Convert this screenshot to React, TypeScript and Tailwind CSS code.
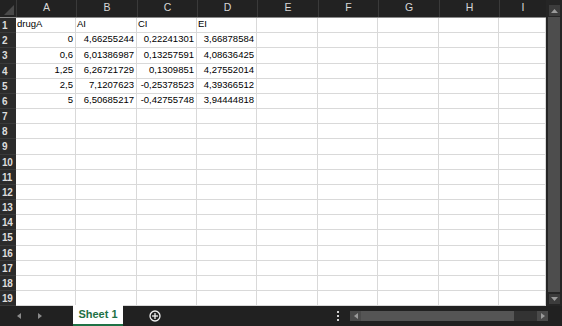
import React from "react";

const cols = [
  { l: "A", w: "w-[60px]" },
  { l: "B", w: "w-[61px]" },
  { l: "C", w: "w-[60px]" },
  { l: "D", w: "w-[60px]" },
  { l: "E", w: "w-[61px]" },
  { l: "F", w: "w-[60px]" },
  { l: "G", w: "w-[61px]" },
  { l: "H", w: "w-[60px]" },
  { l: "I", w: "w-[47px]" },
];

type Cell = { t: string; left?: boolean };
const data: Cell[][] = [
  [{ t: "drugA", left: true }, { t: "AI", left: true }, { t: "CI", left: true }, { t: "EI", left: true }],
  [{ t: "0" }, { t: "4,66255244" }, { t: "0,22241301" }, { t: "3,66878584" }],
  [{ t: "0,6" }, { t: "6,01386987" }, { t: "0,13257591" }, { t: "4,08636425" }],
  [{ t: "1,25" }, { t: "6,26721729" }, { t: "0,1309851" }, { t: "4,27552014" }],
  [{ t: "2,5" }, { t: "7,1207623" }, { t: "-0,25378523" }, { t: "4,39366512" }],
  [{ t: "5" }, { t: "6,50685217" }, { t: "-0,42755748" }, { t: "3,94444818" }],
];

const tall = new Set([2, 8, 14]);

export default function App() {
  const rows = Array.from({ length: 19 }, (_, i) => i);
  return (
    <div className="w-[562px] h-[326px] bg-[#212121] flex flex-col overflow-hidden font-['Liberation_Sans',Arial,sans-serif]">
      <div className="flex h-[306px]">
        <div className="w-[546px] flex flex-col">
          {/* header */}
          <div className="flex h-[18px] bg-[#222222] border-b border-[#8a8a8a]">
            <div className="w-[16px] h-full relative">
              <svg className="absolute left-[4px] top-[5px]" width="10" height="10" viewBox="0 0 10 10">
                <polygon points="10,0 10,10 0,10" fill="#4a4a4a" />
              </svg>
            </div>
            {cols.map((c) => (
              <div
                key={c.l}
                className={`${c.w} h-full flex items-end justify-center pb-[1px] text-[10.5px] text-[#d8d8d8] border-l border-[#3a3a3a]`}
              >
                {c.l}
              </div>
            ))}
          </div>
          {rows.map((i) => (
            <div key={i} className={`flex ${tall.has(i) ? "h-[16px]" : "h-[15px]"}`}>
              <div className="w-[16px] h-full bg-[#2b2b2b] text-[#dcdcdc] text-[10px] font-bold flex items-center pl-[2px] border-b border-[#3a3a3a] tracking-[-0.3px]">
                {i + 1}
              </div>
              {cols.map((c, j) => {
                const cell = data[i]?.[j];
                return (
                  <div
                    key={c.l}
                    className={`${c.w} h-full bg-white border-r border-b border-[#d9d9d9] flex items-end pb-[1px] text-[9.5px] text-black overflow-hidden whitespace-nowrap ${
                      cell?.left ? "justify-start pl-[1px]" : "justify-end pr-[2px]"
                    }`}
                  >
                    {cell?.t ?? ""}
                  </div>
                );
              })}
            </div>
          ))}
        </div>
        {/* vertical scrollbar */}
        <div className="w-[16px] h-full bg-[#252525] flex flex-col items-center pt-[5px] pb-[2px]">
          <div className="w-[11px] h-[11px] bg-[#3c3c3c] flex items-center justify-center">
            <svg width="7" height="4" viewBox="0 0 7 4">
              <polygon points="3.5,0 7,4 0,4" fill="#9a9a9a" />
            </svg>
          </div>
          <div className="w-[12px] flex-1 bg-[#4d4d4d] mt-[1px] mb-[2px]" />
          <div className="w-[11px] h-[10px] bg-[#3c3c3c] flex items-center justify-center">
            <svg width="7" height="4" viewBox="0 0 7 4">
              <polygon points="0,0 7,0 3.5,4" fill="#9a9a9a" />
            </svg>
          </div>
        </div>
      </div>
      {/* tab bar */}
      <div className="h-[20px] flex items-stretch">
        <div className="w-[73px] flex items-center">
          <svg className="ml-[17px]" width="4" height="6" viewBox="0 0 4 6">
            <polygon points="4,0 4,6 0,3" fill="#8a8a8a" />
          </svg>
          <svg className="ml-[17px]" width="4" height="6" viewBox="0 0 4 6">
            <polygon points="0,0 4,3 0,6" fill="#8a8a8a" />
          </svg>
        </div>
        <div className="w-[50px] bg-white border-b-2 border-[#1e7145] flex items-center justify-center text-[11px] font-bold text-[#1e7145] -mt-[1px]">
          Sheet 1
        </div>
        <div className="w-[26px]" />
        <div className="flex items-center">
          <svg width="12" height="12" viewBox="0 0 12 12">
            <circle cx="6" cy="6" r="5" fill="none" stroke="#f0f0f0" strokeWidth="1.3" />
            <line x1="6" y1="3" x2="6" y2="9" stroke="#f0f0f0" strokeWidth="1.3" />
            <line x1="3" y1="6" x2="9" y2="6" stroke="#f0f0f0" strokeWidth="1.3" />
          </svg>
        </div>
        <div className="w-[176px]" />
        <div className="flex flex-col justify-center gap-[2px]">
          <div className="w-[2px] h-[2px] bg-[#d0d0d0]" />
          <div className="w-[2px] h-[2px] bg-[#d0d0d0]" />
          <div className="w-[2px] h-[2px] bg-[#d0d0d0]" />
        </div>
        <div className="w-[11px]" />
        <div className="flex items-center">
          <div className="flex h-[10px] w-[198px] bg-[#333333]">
            <div className="w-[11px] h-full bg-[#4a4a4a] flex items-center justify-center">
              <svg width="4" height="6" viewBox="0 0 4 6">
                <polygon points="4,0 4,6 0,3" fill="#9a9a9a" />
              </svg>
            </div>
            <div className="w-[153px] h-full bg-[#555555]" />
            <div className="flex-1" />
            <div className="w-[11px] h-full bg-[#4a4a4a] flex items-center justify-center">
              <svg width="4" height="6" viewBox="0 0 4 6">
                <polygon points="0,0 4,3 0,6" fill="#9a9a9a" />
              </svg>
            </div>
          </div>
        </div>
      </div>
    </div>
  );
}
